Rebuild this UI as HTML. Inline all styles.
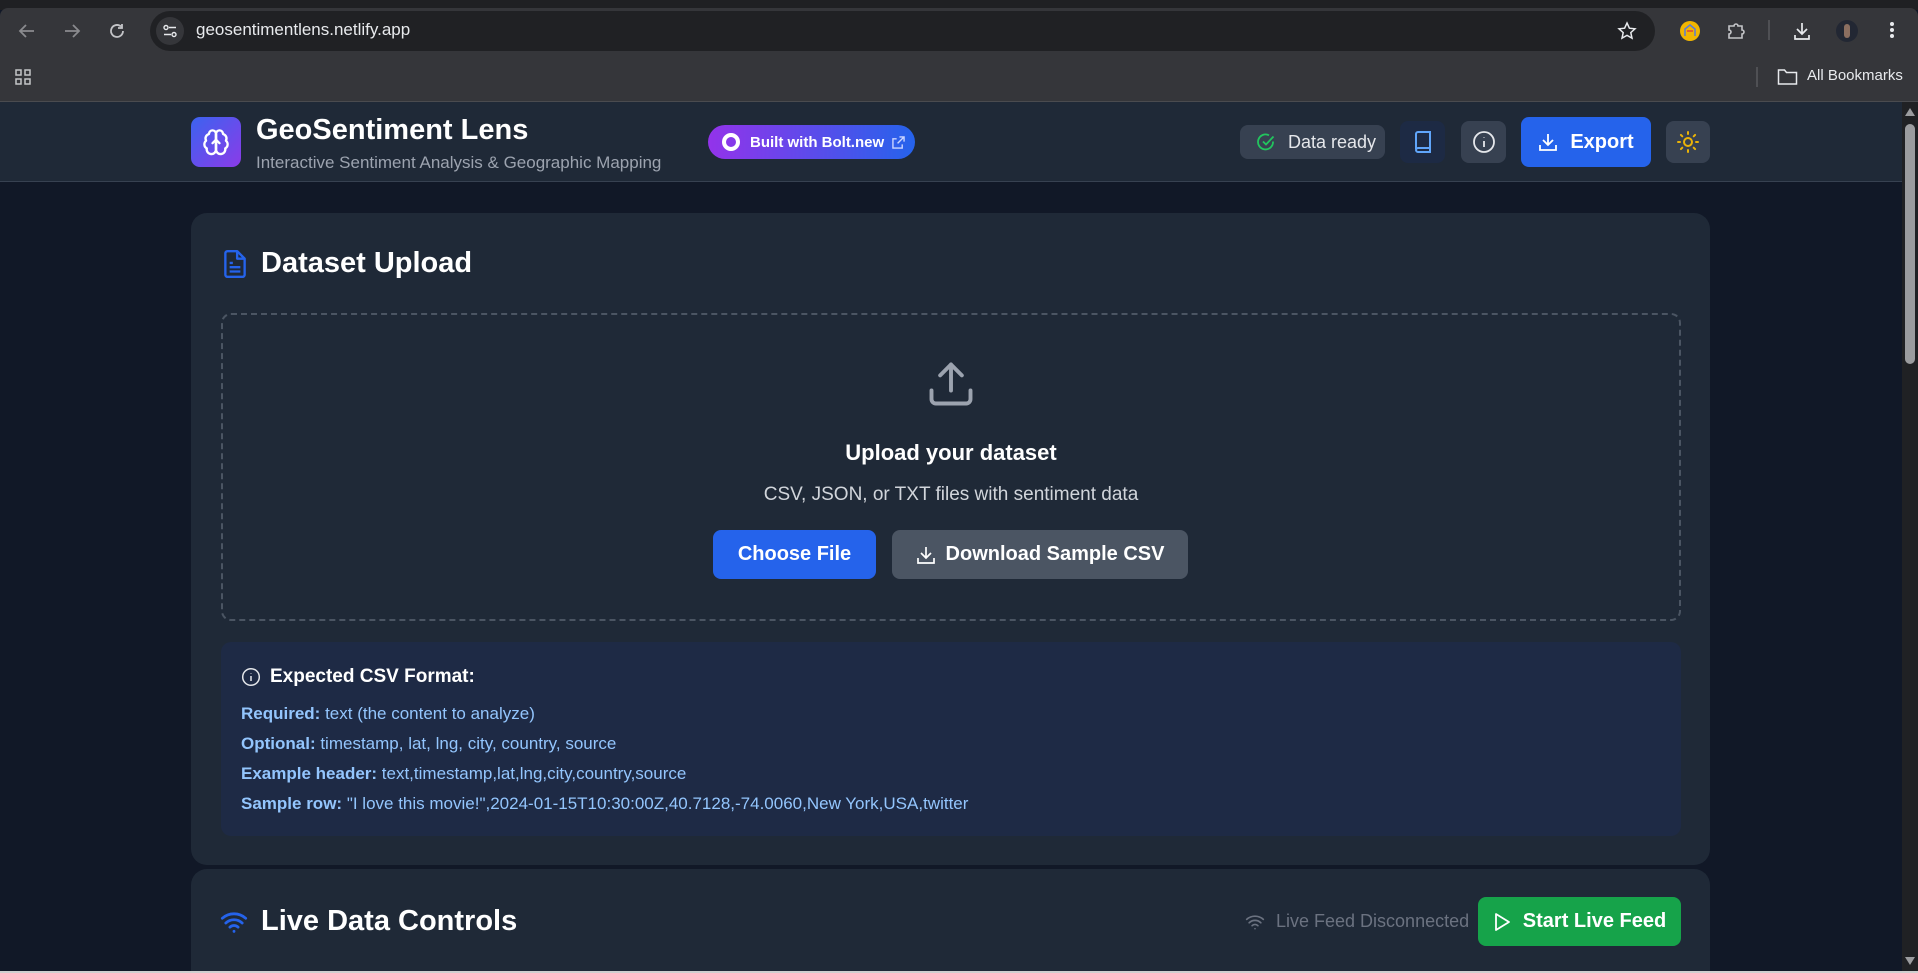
<!DOCTYPE html>
<html style="overflow:hidden;width:1918px;height:973px"><head><meta charset="utf-8"><style>
*{box-sizing:border-box;margin:0;padding:0}
body{width:1918px;height:973px;overflow:hidden;background:#111827;font-family:"Liberation Sans",sans-serif;position:relative;color:#fff}
.a{position:absolute}
svg{display:block}
.hbtn{position:absolute;border-radius:8px;display:flex;align-items:center;justify-content:center}
.lines div{position:absolute;left:241px;font-size:17px;color:#93c5fd;white-space:nowrap}
.lines b{color:#93c5fd}
</style></head><body>
<!-- browser chrome -->
<div class="a" style="left:0;top:0;width:1918px;height:10px;background:#1f2023"></div>
<div class="a" style="left:0;top:8px;width:1918px;height:94px;background:#35363a;border-radius:8px 8px 0 0"></div>
<div class="a" style="left:0;top:101px;width:1918px;height:1px;background:#4a4b4f"></div>
<svg class="a" style="left:17px;top:21px" width="20" height="20" viewBox="0 0 20 20" fill="none" stroke="#8a8b8e" stroke-width="1.8"><path d="M17 10H4M9 4l-6 6 6 6"/></svg>
<svg class="a" style="left:62px;top:21px" width="20" height="20" viewBox="0 0 20 20" fill="none" stroke="#8a8b8e" stroke-width="1.8"><path d="M3 10h13M11 4l6 6-6 6"/></svg>
<svg class="a" style="left:107px;top:21px" width="20" height="20" viewBox="0 0 20 20" fill="none" stroke="#c4c5c8" stroke-width="1.8"><path d="M16 10a6 6 0 1 1-2-4.5M15 3v4h-4"/></svg>
<div class="a" style="left:150px;top:11px;width:1505px;height:40px;border-radius:20px;background:#202124"></div>
<div class="a" style="left:156px;top:17px;width:28px;height:28px;border-radius:14px;background:#35363a"></div>
<svg class="a" style="left:162px;top:23px" width="16" height="16" viewBox="0 0 16 16" fill="none" stroke="#e8eaed" stroke-width="1.4"><circle cx="4" cy="4.5" r="2"/><path d="M7 4.5h7M2 11.5h7"/><circle cx="12" cy="11.5" r="2"/></svg>
<div class="a" style="left:196px;top:20px;font-size:17px;color:#e8eaed">geosentimentlens.netlify.app</div>
<svg class="a" style="left:1617px;top:21px" width="20" height="20" viewBox="0 0 20 20" fill="none" stroke="#e8eaed" stroke-width="1.5"><path d="M10 2l2.4 5.2 5.6.6-4.2 3.8 1.2 5.6L10 14.4 5 17.2l1.2-5.6L2 7.8l5.6-.6z"/></svg>
<div class="a" style="left:1680px;top:21px;width:20px;height:20px;border-radius:10px;background:#f2b600"></div>
<svg class="a" style="left:1684px;top:24px" width="12" height="13" viewBox="0 0 12 13" fill="none" stroke="#5b7bd5" stroke-width="1.5"><path d="M1 12V5l5-4 5 4v7"/><path d="M3 7h6" stroke="#e0443a"/></svg>
<svg class="a" style="left:1726px;top:21px" width="20" height="20" viewBox="0 0 20 20" fill="none" stroke="#c4c5c8" stroke-width="1.6"><path d="M3 5h5a2 2 0 0 1 4 0h4v4a2 2 0 0 1 0 4v4H3v-4a2 2 0 0 0 0-4z"/></svg>
<div class="a" style="left:1768px;top:20px;width:2px;height:20px;background:#4f5054"></div>
<svg class="a" style="left:1792px;top:21px" width="20" height="20" viewBox="0 0 20 20" fill="none" stroke="#e8eaed" stroke-width="1.7"><path d="M10 2v10M5 8l5 5 5-5M3 14v4h14v-4"/></svg>
<div class="a" style="left:1836px;top:20px;width:22px;height:22px;border-radius:11px;background:#222733"></div>
<div class="a" style="left:1844px;top:24px;width:6px;height:14px;border-radius:3px;background:#8a6e60"></div>
<div class="a" style="left:1890px;top:22px;width:4px;height:4px;border-radius:2px;background:#e8eaed;box-shadow:0 6px 0 #e8eaed,0 12px 0 #e8eaed"></div>
<svg class="a" style="left:14px;top:68px" width="18" height="18" viewBox="0 0 18 18" fill="none" stroke="#c4c5c8" stroke-width="1.5"><rect x="2" y="2" width="5" height="5"/><rect x="11" y="2" width="5" height="5"/><rect x="2" y="11" width="5" height="5"/><rect x="11" y="11" width="5" height="5"/></svg>
<div class="a" style="left:1756px;top:67px;width:2px;height:20px;background:#4f5054"></div>
<svg class="a" style="left:1777px;top:68px" width="21" height="18" viewBox="0 0 21 18" fill="none" stroke="#e8eaed" stroke-width="1.5"><path d="M1.5 2h6l2 2.5h10V16h-18z"/></svg>
<div class="a" style="left:1807px;top:67px;font-size:15px;color:#e8eaed">All Bookmarks</div>

<!-- scrollbar -->
<div class="a" style="left:1902px;top:102px;width:16px;height:871px;background:#202124"></div>
<div class="a" style="left:1905px;top:124px;width:10px;height:240px;border-radius:5px;background:#9b9c9f"></div>
<div class="a" style="left:1905px;top:108px;width:0;height:0;border-left:5px solid transparent;border-right:5px solid transparent;border-bottom:8px solid #9b9c9f"></div>
<div class="a" style="left:1905px;top:957px;width:0;height:0;border-left:5px solid transparent;border-right:5px solid transparent;border-top:8px solid #9b9c9f"></div>

<!-- app header -->
<div class="a" style="left:0;top:102px;width:1902px;height:80px;background:#1f2937;border-bottom:1px solid #374151"></div>
<div class="a" style="left:191px;top:117px;width:50px;height:50px;border-radius:9px;background:linear-gradient(135deg,#3b63f0,#8b3be8)"></div>
<svg class="a" style="left:202px;top:128px" width="28" height="28" viewBox="0 0 24 24" fill="none" stroke="#fff" stroke-width="2" stroke-linecap="round" stroke-linejoin="round"><path d="M12 5a3 3 0 1 0-6 .1 4 4 0 0 0-2.5 5.8 4 4 0 0 0 .6 6.6A4 4 0 1 0 12 18z"/><path d="M12 5a3 3 0 1 1 6 .1 4 4 0 0 1 2.5 5.8 4 4 0 0 1-.6 6.6A4 4 0 1 1 12 18z"/><path d="M12 5v13"/><path d="M9 13l3-3 3 3"/></svg>
<div class="a" style="left:256px;top:114px;font-size:29px;font-weight:bold;color:#fff">GeoSentiment Lens</div>
<div class="a" style="left:256px;top:153px;font-size:17px;color:#9ca3af">Interactive Sentiment Analysis &amp; Geographic Mapping</div>
<div class="a" style="left:708px;top:125px;width:207px;height:34px;border-radius:17px;background:linear-gradient(90deg,#9333ea,#2563eb);display:flex;align-items:center;padding-left:14px;font-size:15px;font-weight:bold;color:#fff"><span style="width:18px;height:18px;border-radius:9px;border:4px solid #fff;margin-right:10px"></span>Built with Bolt.new<svg style="margin-left:8px" width="13" height="13" viewBox="0 0 14 14" fill="none" stroke="#cbd5ff" stroke-width="1.5"><path d="M8 1h5v5M13 1L6 8M11 9v4H1V3h4"/></svg></div>
<div class="hbtn" style="left:1240px;top:125px;width:145px;height:34px;background:#374151;justify-content:flex-start;padding-left:16px;font-size:18px;color:#e5e7eb"><svg width="20" height="20" viewBox="0 0 20 20" fill="none" stroke="#22c55e" stroke-width="1.8"><path d="M17 9.5A7.5 7.5 0 1 1 13 3.3"/><path d="M7 9.5l3 3 7.5-8"/></svg><span style="margin-left:12px">Data ready</span></div>
<div class="hbtn" style="left:1400px;top:121px;width:45px;height:42px;background:#1d2a44"><svg width="22" height="24" viewBox="0 0 22 24" fill="none" stroke="#60a5fa" stroke-width="2"><path d="M4 19V4a2 2 0 0 1 2-2h12v20H6a2 2 0 0 1-2-2 2 2 0 0 1 2-2h12"/></svg></div>
<div class="hbtn" style="left:1461px;top:121px;width:45px;height:42px;background:#374151"><svg width="24" height="24" viewBox="0 0 24 24" fill="none" stroke="#e5e7eb" stroke-width="1.8"><circle cx="12" cy="12" r="10"/><path d="M12 11v6M12 7.5v.5"/></svg></div>
<div class="hbtn" style="left:1521px;top:117px;width:130px;height:50px;background:#2563eb;font-size:20px;font-weight:bold;color:#fff"><svg width="20" height="20" viewBox="0 0 20 20" fill="none" stroke="#fff" stroke-width="1.8"><path d="M10 2v11M5 8l5 5 5-5M2 13v5h16v-5"/></svg><span style="margin-left:12px">Export</span></div>
<div class="hbtn" style="left:1666px;top:121px;width:44px;height:42px;background:#374151"><svg width="24" height="24" viewBox="0 0 24 24" fill="none" stroke="#eab308" stroke-width="2" stroke-linecap="round"><circle cx="12" cy="12" r="4"/><path d="M12 2v2M12 20v2M2 12h2M20 12h2M4.9 4.9l1.4 1.4M17.7 17.7l1.4 1.4M4.9 19.1l1.4-1.4M17.7 6.3l1.4-1.4"/></svg></div>

<!-- card 1 -->
<div class="a" style="left:191px;top:213px;width:1519px;height:652px;border-radius:16px;background:#1f2937"></div>
<svg class="a" style="left:222px;top:249px" width="26" height="30" viewBox="0 0 24 28" fill="none" stroke="#2563eb" stroke-width="2.2" stroke-linejoin="round"><path d="M14 2H5a2 2 0 0 0-2 2v20a2 2 0 0 0 2 2h14a2 2 0 0 0 2-2V9z"/><path d="M14 2v7h7M7 13h3M7 17h10M7 21h10"/></svg>
<div class="a" style="left:261px;top:247px;font-size:29px;font-weight:bold;color:#fff">Dataset Upload</div>
<div class="a" style="left:221px;top:313px;width:1460px;height:308px;border:2px dashed #4b5563;border-radius:10px"></div>
<svg class="a" style="left:925px;top:358px" width="52" height="52" viewBox="0 0 24 24" fill="none" stroke="#9ca3af" stroke-width="1.8" stroke-linecap="round" stroke-linejoin="round"><path d="M21 15v4a2 2 0 0 1-2 2H5a2 2 0 0 1-2-2v-4M17 8l-5-5-5 5M12 3v12"/></svg>
<div class="a" style="left:0;width:1902px;top:440px;text-align:center;font-size:22px;font-weight:bold;color:#fff">Upload your dataset</div>
<div class="a" style="left:0;width:1902px;top:484px;text-align:center;font-size:19px;color:#d1d5db">CSV, JSON, or TXT files with sentiment data</div>
<div class="hbtn" style="left:713px;top:530px;width:163px;height:49px;background:#2563eb;font-size:20px;font-weight:bold;color:#fff">Choose File</div>
<div class="hbtn" style="left:892px;top:530px;width:296px;height:49px;background:#4b5563;font-size:20px;font-weight:bold;color:#fff"><svg width="20" height="20" viewBox="0 0 20 20" fill="none" stroke="#fff" stroke-width="1.7"><path d="M10 2v11M5 8l5 5 5-5M2 13v5h16v-5"/></svg><span style="margin-left:10px">Download Sample CSV</span></div>

<div class="a" style="left:221px;top:642px;width:1460px;height:194px;border-radius:10px;background:#1e2a45"></div>
<svg class="a" style="left:241px;top:667px" width="20" height="20" viewBox="0 0 20 20" fill="none" stroke="#e5e7eb" stroke-width="1.5"><circle cx="10" cy="10" r="8.3"/><path d="M10 9v5M10 6v.5"/></svg>
<div class="a" style="left:270px;top:666px;font-size:19px;font-weight:bold;color:#fff">Expected CSV Format:</div>
<div class="lines">
<div style="top:704px"><b>Required:</b> text (the content to analyze)</div>
<div style="top:734px"><b>Optional:</b> timestamp, lat, lng, city, country, source</div>
<div style="top:764px"><b>Example header:</b> text,timestamp,lat,lng,city,country,source</div>
<div style="top:794px"><b>Sample row:</b> "I love this movie!",2024-01-15T10:30:00Z,40.7128,-74.0060,New York,USA,twitter</div>
</div>

<!-- card 2 -->
<div class="a" style="left:191px;top:869px;width:1519px;height:102px;border-radius:16px 16px 0 0;background:#1f2937"></div>
<svg class="a" style="left:220px;top:908px" width="28" height="28" viewBox="0 0 24 24" fill="none" stroke="#2563eb" stroke-width="2.4" stroke-linecap="round"><path d="M2 8.8a15 15 0 0 1 20 0M5 12.9a10 10 0 0 1 14 0M8.5 16.4a5 5 0 0 1 7 0M12 20h.01"/></svg>
<div class="a" style="left:261px;top:905px;font-size:29px;font-weight:bold;color:#fff">Live Data Controls</div>
<svg class="a" style="left:1245px;top:912px" width="20" height="20" viewBox="0 0 24 24" fill="none" stroke="#6b7280" stroke-width="2" stroke-linecap="round"><path d="M2 8.8a15 15 0 0 1 20 0M5 12.9a10 10 0 0 1 14 0M8.5 16.4a5 5 0 0 1 7 0M12 20h.01"/></svg>
<div class="a" style="left:1276px;top:911px;font-size:18px;color:#6b7280">Live Feed Disconnected</div>
<div class="hbtn" style="left:1478px;top:897px;width:203px;height:49px;background:#16a34a;font-size:20px;font-weight:bold;color:#fff"><svg width="18" height="20" viewBox="0 0 18 20" fill="none" stroke="#fff" stroke-width="1.8" stroke-linejoin="round"><path d="M3 2l13 8-13 8z"/></svg><span style="margin-left:12px">Start Live Feed</span></div>
<div class="a" style="left:0;top:971px;width:1918px;height:2px;background:#cfcfcf"></div>
</body></html>
